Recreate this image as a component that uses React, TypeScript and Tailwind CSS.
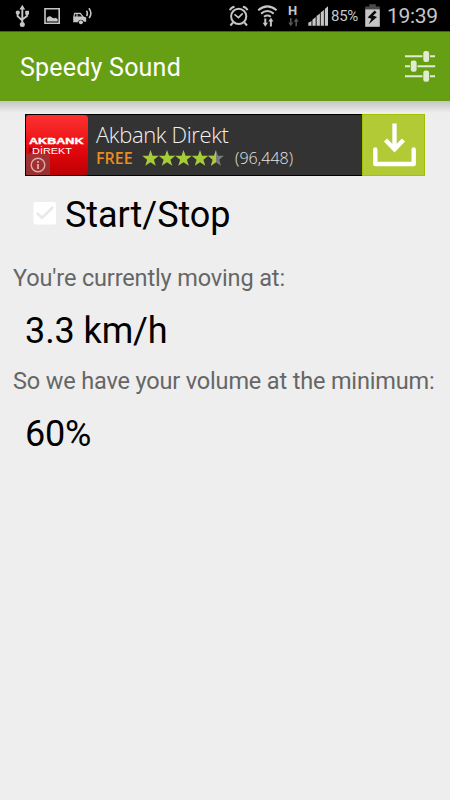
import React from 'react';

const UsbIcon = () => (
  <svg width="16" height="24" viewBox="14 4 16 24" fill="none" stroke="#c6c6c6" strokeWidth="1.9">
    <path d="M22.3 8v16M17.6 13v3.2l4.7 4.3M27 13v3l-4.7 3.4" />
    <path d="M22.3 4.8l2.9 4.7h-5.8z" fill="#c6c6c6" stroke="none" />
    <circle cx="22.3" cy="24.4" r="2.5" fill="#c6c6c6" stroke="none" />
    <circle cx="17.8" cy="12.6" r="2.1" fill="#c6c6c6" stroke="none" />
    <path d="M25.2 10.8h3.8v3.8h-3.8z" fill="#c6c6c6" stroke="none" />
  </svg>
);

const PictureIcon = () => (
  <svg width="16" height="24" viewBox="44 4 16 24">
    <path d="M45 8.8h14.2v14.4H45z" fill="none" stroke="#c6c6c6" strokeWidth="1.6" />
    <path d="M46.8 21.4v-3.7l2.3-1.4 1.8.2 1.7 1.6 2 .2 1.3-.6 1.8 1.5v2.2z" fill="#c6c6c6" />
  </svg>
);

const CarIcon = () => (
  <svg width="21" height="24" viewBox="72 4 21 24">
    <path d="M73.2 22.2v-5.4l1-4.1h6.4l3 3.7 2.6 1.2v4.2h-2.4a3 3 0 0 0-5.8.4z" fill="#c6c6c6" />
    <path d="M74.5 16.4l.6-2.5h1.4v2.5zM77.5 13.9h2.5l2 2.5h-4.5z" fill="#161616" />
    <circle cx="80.9" cy="22.3" r="2" fill="#c6c6c6" />
    <path d="M86.4 10.8q1.8 2.5.2 5.4M88.9 8.3q3.8 4.6.3 9.8" fill="none" stroke="#c6c6c6" strokeWidth="1.6" />
  </svg>
);

const AlarmIcon = () => (
  <svg width="22" height="24" viewBox="228 4 22 24" fill="none" stroke="#c6c6c6" strokeWidth="2">
    <circle cx="238.7" cy="16.3" r="7.6" />
    <path d="M234.5 14.3l4 3.3 4.2-4.2" strokeWidth="1.6" />
    <path d="M229.9 10.3q.9-3 4.6-3.6M247.5 10.3q-.9-3-4.6-3.6" />
    <path d="M233 22.5l-2.6 3M244.4 22.5l2.6 3" />
  </svg>
);

const WifiIcon = () => (
  <svg width="21" height="24" viewBox="257 4 21 24" fill="none" stroke="#c6c6c6" strokeWidth="2">
    <path d="M258.2 10.2q9.2-7.7 18.4 0M261.1 13.6q6.3-5.1 12.6 0M264 16.8q3.4-2.5 6.8 0" />
    <path d="M265.3 18.5v6M270.9 26.5v-7" />
    <path d="M262.7 22.8h5.2l-2.6 3.9zM268.3 21.6h5.2l-2.6-3.9z" fill="#c6c6c6" stroke="none" />
  </svg>
);

const DataArrows = () => (
  <svg width="13" height="10" viewBox="287 17 13 10" fill="#555">
    <path d="M290 18h1.6v4.5h1.8l-2.6 3.8-2.6-3.8h1.8zM295.4 26.3h1.6v-4.6h1.8l-2.6-3.8-2.6 3.8h1.8z" />
  </svg>
);

const SignalIcon = () => (
  <svg width="21" height="24" viewBox="308 4 21 24" fill="#c6c6c6">
    <path d="M308.3 25.7v-3l3.2-1.7v4.7zM312.4 25.7v-6l3.3-2.7v8.7zM316.6 25.7v-9.8l3.3-2.4v12.2zM320.7 25.7V12.5l3.2-2.4v15.6zM324.8 25.7V8.9l3.2-2.7v19.5z" />
  </svg>
);

const BatteryIcon = () => (
  <svg width="15" height="24" viewBox="365 4 15 24">
    <path d="M369.2 4.3h6.6v2.3h4v2.8h-14.6V6.6h4z" fill="#4a4a4a" />
    <path d="M365.2 9.3h14.6v17.5h-14.6z" fill="#c6c6c6" />
    <path d="M374.6 10.4l-7 7.2 3.8 1.2-2.8 5.4 8.4-7.3-4-1.3 3.6-3.2z" fill="#080808" />
  </svg>
);

const SlidersIcon = () => (
  <svg width="32" height="32" viewBox="404 51 32 32" fill="#e1ebd0">
    <path d="M405 55.2h17.5v2H405zM430 55.2h5v2h-5zM405 65.2h5v2h-5zM417.5 65.2h17.7v2h-17.7zM405 75.2h17.5v2H405zM430 75.2h5v2h-5z" />
    <rect x="423.3" y="51" width="5.8" height="11" rx="2.2" />
    <rect x="410.8" y="60.6" width="5.8" height="11.2" rx="2.2" />
    <rect x="423.3" y="70.6" width="5.8" height="11.2" rx="2.2" />
  </svg>
);

const STAR = 'M8.5 0l2.1 5.8h6.2l-4.9 4 1.9 6-5.3-3.5-5.2 3.5 1.8-6L.2 5.8h6.3z';

const Rating = () => (
  <svg width="82" height="17" viewBox="0 0 82 17" fill="#a8cb3a">
    {[0, 16.5, 33, 49.5].map((x) => (
      <path key={x} d={STAR} transform={`translate(${x})`} />
    ))}
    <path d={STAR} transform="translate(65.8) scale(.96 1)" fill="#7c7c7c" />
    <path d="M74 0v12.3l-5.1 3.5 1.8-6L66 5.8h6z" />
  </svg>
);

const DownloadIcon = () => (
  <svg width="44" height="44" viewBox="0 0 44 44" fill="none" stroke="#fff" strokeWidth="4.4">
    <path d="M22.5 .5v26" />
    <path d="M13.5 17l9 9.3 9-9.3" />
    <path d="M3.3 26.5V41h38.4V26.5" strokeLinejoin="round" strokeLinecap="round" />
  </svg>
);

const StatusBar = () => (
  <div className="flex h-[31px] items-center bg-black pl-[14px] text-[#c6c6c6]">
    <UsbIcon />
    <div className="ml-[14px]"><PictureIcon /></div>
    <div className="ml-3"><CarIcon /></div>
    <div className="ml-[135px]"><AlarmIcon /></div>
    <div className="ml-[7px]"><WifiIcon /></div>
    <div className="ml-[9px] flex w-[13px] flex-col">
      <span className="h-[13px] pl-px text-[13px] leading-[13px] font-bold">H</span>
      <DataArrows />
    </div>
    <div className="ml-2"><SignalIcon /></div>
    <span className="ml-[2px] w-[34px] pt-[2px] text-[15px] tracking-[-0.3px]">85%</span>
    <BatteryIcon />
    <span className="ml-[7px] pt-[2px] text-[21px] leading-[29px] tracking-[-0.3px]">19:39</span>
  </div>
);

const AdBanner = () => (
  <div className="mx-[25px] mt-[12px] flex h-[62px] font-['Open_Sans',sans-serif]">
    <div className="flex w-[337px] border-y border-l border-black bg-[#333]">
      <div className="relative h-[60px] w-[62px] rounded-[4px] bg-linear-to-b from-[#ff3030] via-[#e90b10] to-[#bd0004] text-white">
        <svg width="62" height="60" viewBox="0 0 62 60" fill="#fff" fontFamily="Liberation Sans, sans-serif">
          <path d="M3 32l6 2.7L3 38z" fill="#9b0000" />
          <text x="3" y="29" fontSize="9.6" fontWeight="700" stroke="#fff" strokeWidth=".4" textLength="54.5" lengthAdjust="spacingAndGlyphs">AKBANK</text>
          <text x="6" y="38.8" fontSize="8.8" textLength="40" lengthAdjust="spacingAndGlyphs">DİREKT</text>
        </svg>
        <div className="absolute bottom-0 left-0 flex h-[21px] w-6 items-center justify-center rounded-tr-[4px] bg-[#8e4040]/75">
          <svg width="16" height="16" viewBox="0 0 16 16" fill="none" stroke="#e0a9a9" strokeWidth="1.4">
            <circle cx="8" cy="8" r="6.8" />
            <path d="M8 7v5M8 4v1.7" strokeWidth="1.8" />
          </svg>
        </div>
      </div>
      <div className="ml-[8px] pt-[6px]">
        <div className="text-[22px] leading-[27px] font-light tracking-[-0.35px] whitespace-nowrap text-[#f1f1f1]">Akbank Direkt</div>
        <div className="mt-px flex h-[18px] items-center">
          <span className="w-[46px] text-[16px] font-semibold tracking-[0px] text-[#e98d21]">FREE</span>
          <Rating />
          <span className="ml-[11px] text-[16px] font-light tracking-[0.05px] text-[#e4e4e4]">(96,448)</span>
        </div>
      </div>
    </div>
    <div className="flex w-[63px] items-center justify-center border border-[#a5c000] bg-[#b1ca35]">
      <DownloadIcon />
    </div>
  </div>
);

export default function App() {
  return (
    <div className="flex h-[800px] w-[450px] flex-col overflow-hidden bg-[#eee] font-[Roboto,sans-serif]">
      <StatusBar />
      <header className="flex h-[70px] items-center justify-between border-t border-[#42680b] bg-[#669f13] pr-[14px] pl-5">
        <h1 className="pt-[2px] text-[25px] tracking-[0.22px] text-white">Speedy Sound</h1>
        <SlidersIcon />
      </header>
      <main className="flex-1 bg-linear-to-b from-[#c5c5c5] to-[#eee] to-[12px]">
        <div className="h-px" />
        <AdBanner />
        <label className="mt-[15px] ml-[32px] flex h-12 items-center">
          <svg width="24" height="24" viewBox="0 0 24 24" className="mt-[-5px]">
            <rect x="1.5" y="1" width="22.5" height="22.5" rx="2" fill="#fff" />
            <path d="M5 12l5 5 11-11" fill="none" stroke="#e9e9e9" strokeWidth="2.6" />
          </svg>
          <span className="ml-[9px] text-[36px] tracking-[-0.05px]">Start/Stop</span>
        </label>
        <p className="mt-[23px] ml-[13px] text-[23.5px] leading-8 tracking-[-0.14px] text-[#666]">You're currently moving at:</p>
        <p className="mt-[13px] ml-[25px] text-[36px] leading-[48px] tracking-[-0.1px]">3.3 km/h</p>
        <p className="mt-[10px] ml-[13px] text-[23.5px] leading-8 tracking-[-0.16px] whitespace-nowrap text-[#666]">So we have your volume at the minimum:</p>
        <p className="mt-[13px] ml-[25px] text-[36px] leading-[48px] tracking-[-0.2px]">60%</p>
      </main>
    </div>
  );
}
